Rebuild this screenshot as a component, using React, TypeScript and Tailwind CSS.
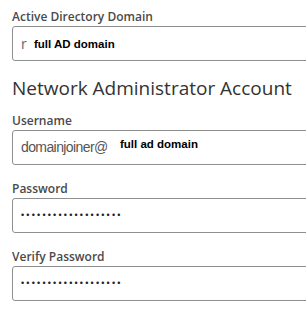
import React from "react";

const Label = ({ children, mt }: { children: React.ReactNode; mt: string }) => (
  <div className={`${mt} h-[16px] text-[12px] leading-[16px] font-semibold text-[#4a4a4a] whitespace-nowrap`}>
    {children}
  </div>
);

const Box = ({ children }: { children: React.ReactNode }) => (
  <div className="relative mt-[1px] h-[35px] w-[320px] rounded-[3px] border border-[#8f8f8f] flex items-center pl-[8px] whitespace-nowrap">
    {children}
  </div>
);

const Dots = () => (
  <span className="text-[#222] text-[9px] tracking-[2.2px] leading-none font-['Liberation_Sans',sans-serif]">
    {"•••••••••••••••••••"}
  </span>
);

export default function App() {
  return (
    <div className="w-[306px] h-[312px] overflow-hidden bg-white pl-[12px] pt-[9px] font-['Open_Sans',sans-serif]">
      <Label mt="mt-0">Active Directory Domain</Label>
      <Box>
        <span className="text-[14px] text-[#666]">r</span>
        <span className="absolute left-[20px] top-[9px] bg-white pl-[1px] pr-[2px] text-[11.5px] leading-[16px] font-bold text-black font-['Liberation_Sans',sans-serif]">
          full AD domain
        </span>
      </Box>
      <div className="mt-[15px] h-[24px] text-[19px] leading-[24px] text-[#333] whitespace-nowrap">
        Network Administrator Account
      </div>
      <Label mt="mt-[13px]">Username</Label>
      <Box>
        <span className="text-[14px] tracking-[-0.6px] text-[#555] font-['Liberation_Sans',sans-serif]">
          domainjoiner@&nbsp;&nbsp;&nbsp; f
        </span>
        <span className="absolute left-[107px] top-[6px] bg-white pr-[2px] text-[11.5px] leading-[15px] font-bold text-black font-['Liberation_Sans',sans-serif]">
          full ad domain
        </span>
      </Box>
      <Label mt="mt-[16px]">Password</Label>
      <Box>
        <Dots />
      </Box>
      <Label mt="mt-[16px]">Verify Password</Label>
      <Box>
        <Dots />
      </Box>
    </div>
  );
}
